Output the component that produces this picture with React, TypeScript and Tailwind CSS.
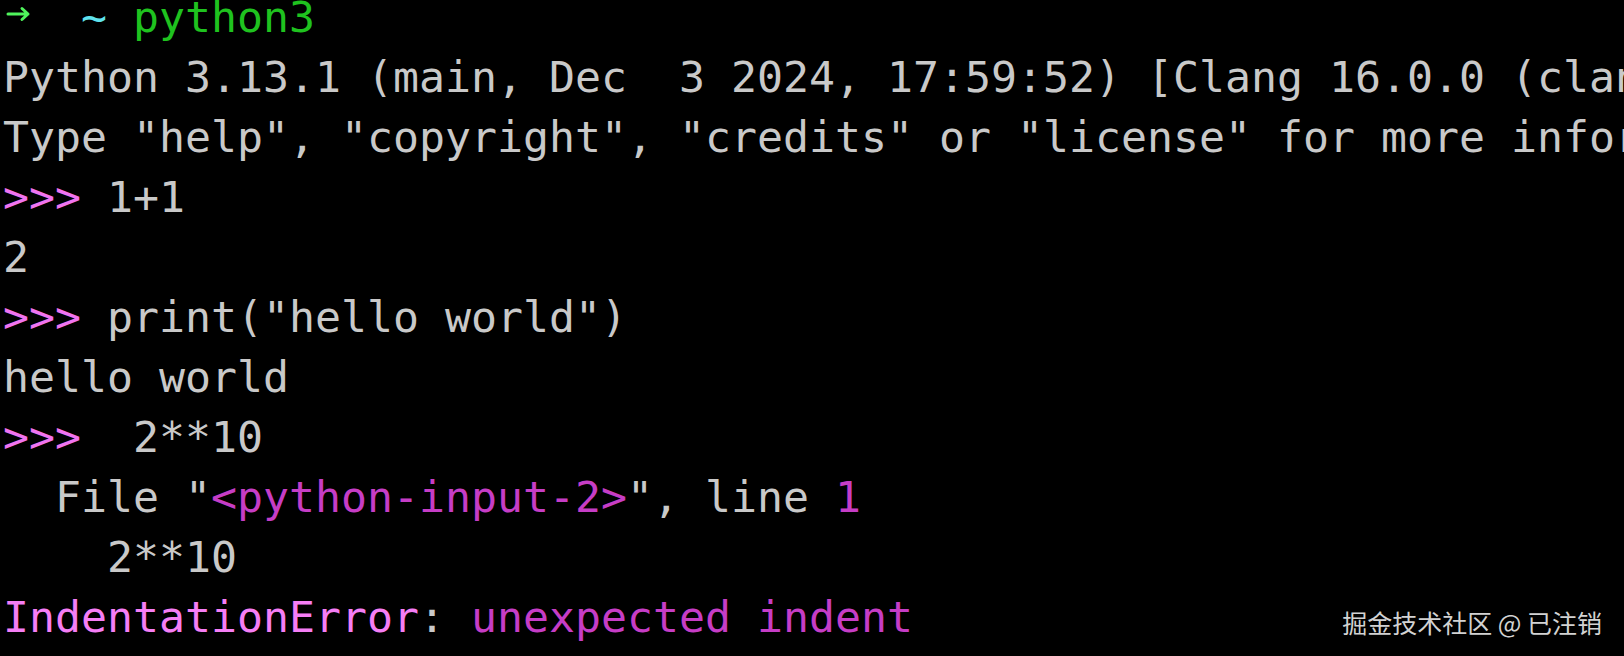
import React from "react";

const Gray = ({ children }: { children: React.ReactNode }) => (
  <span className="text-[#c9c9c9]">{children}</span>
);
const Prompt = () => <span className="text-[#f074f0]">&gt;&gt;&gt;</span>;
const Mag = ({ children }: { children: React.ReactNode }) => (
  <span className="text-[#c63dc6]">{children}</span>
);

const Line = ({ children }: { children: React.ReactNode }) => (
  <div className="h-[60px] leading-[60px] whitespace-pre">{children}</div>
);

export default function App() {
  return (
    <div className="relative w-[1624px] h-[656px] overflow-hidden bg-black">
      <div
        className="mt-[-13px] pl-[3px] text-[43.2px] text-[#c9c9c9]"
        style={{ fontFamily: '"DejaVu Sans Mono", "Liberation Mono", monospace' }}
      >
        <Line>
          <span className="inline-block w-[26px] h-[60px] align-top relative">
            <svg
              width="26"
              height="16"
              viewBox="0 0 26 16"
              className="absolute left-[3px] top-[19px]"
            >
              <path
                d="M2 8 H22 M16 2.5 L22 8 L16 13.5"
                stroke="#4ff35c"
                strokeWidth="3"
                fill="none"
                strokeLinecap="round"
                strokeLinejoin="round"
              />
            </svg>
          </span>
          <span>  </span>
          <span className="text-[#5fe3ee]">~</span>
          <span> </span>
          <span className="text-[#1fc21f]">python3</span>
        </Line>
        <Line>
          <Gray>Python 3.13.1 (main, Dec  3 2024, 17:59:52) [Clang 16.0.0 (clang-1600.0.26.4)] on darwin</Gray>
        </Line>
        <Line>
          <Gray>Type "help", "copyright", "credits" or "license" for more information.</Gray>
        </Line>
        <Line>
          <Prompt /> <Gray>1+1</Gray>
        </Line>
        <Line>
          <Gray>2</Gray>
        </Line>
        <Line>
          <Prompt /> <Gray>print("hello world")</Gray>
        </Line>
        <Line>
          <Gray>hello world</Gray>
        </Line>
        <Line>
          <Prompt />  <Gray>2**10</Gray>
        </Line>
        <Line>
          <Gray>  File "</Gray>
          <Mag>&lt;python-input-2&gt;</Mag>
          <Gray>", line </Gray>
          <Mag>1</Mag>
        </Line>
        <Line>
          <Gray>    2**10</Gray>
        </Line>
        <Line>
          <span className="text-[#f57ef5]">IndentationError</span>
          <Gray>: </Gray>
          <Mag>unexpected indent</Mag>
        </Line>
      </div>
      <div
        className="absolute right-[22px] bottom-[19px] text-[25px] leading-[30px] text-[#d2d2d2] whitespace-pre"
        style={{ fontFamily: '"Noto Sans CJK SC", "Noto Sans", sans-serif' }}
      >
        掘金技术社区 @ 已注销
      </div>
    </div>
  );
}
